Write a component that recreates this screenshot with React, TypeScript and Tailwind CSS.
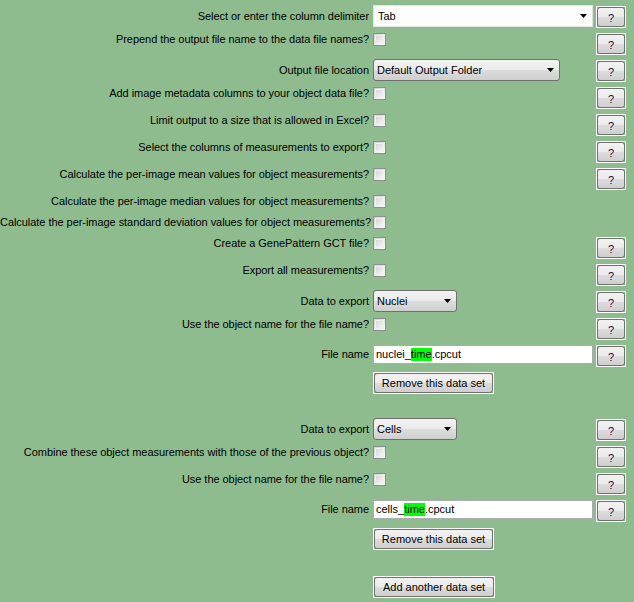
import React from 'react';

const font = { fontFamily: '"Liberation Sans", Arial, sans-serif' };

function HelpButton() {
  return (
    <div className="ml-[2px] mt-[1px] h-[22px] w-[30px] border border-white">
      <div className="flex h-full w-full items-center justify-center rounded-[3px] border border-[#707070] bg-[linear-gradient(#f2f2f2_0%,#ebebeb_50%,#dddddd_50%,#cfcfcf_100%)] pt-[2px] text-[11px] text-[#10104a]">
        ?
      </div>
    </div>
  );
}

function Checkbox() {
  return (
    <div className="mt-[1px] h-[13px] w-[13px] border border-[#8e8f8f] bg-[linear-gradient(135deg,#cfcfcf,#f0f0f0_70%,#ffffff)] p-[1px]">
      <div className="h-full w-full border border-[#f0f0f0]" />
    </div>
  );
}

function Arrow() {
  return (
    <svg width="7" height="4" viewBox="0 0 7 4" className="shrink-0">
      <path d="M0 0h7L3.5 4z" fill="#000" />
    </svg>
  );
}

function Combo({ value }: { value: string }) {
  return (
    <div className="flex h-[22px] w-[220px] items-center justify-between border border-[#e3e3e3] bg-white pl-[4px] pr-[5px]">
      <span>{value}</span>
      <Arrow />
    </div>
  );
}

function Choice({ value, width }: { value: string; width: string }) {
  return (
    <div
      className={`flex h-[22px] ${width} items-center justify-between rounded-[3px] border border-[#707070] bg-[linear-gradient(#f2f2f2_0%,#ebebeb_50%,#dddddd_50%,#cfcfcf_100%)] pl-[3px] pr-[5px]`}
    >
      <span>{value}</span>
      <Arrow />
    </div>
  );
}

function TextField({ prefix }: { prefix: string }) {
  return (
    <div className="mt-[1px] flex h-[19px] w-[220px] items-center border border-[#abadb3] bg-white pl-[2px]">
      <span>{prefix}</span>
      <span className="bg-[#00ff00]">time</span>
      <span>.cpcut</span>
    </div>
  );
}

function PushButton({ label, width }: { label: string; width: string }) {
  return (
    <div className={`mt-[1px] h-[22px] ${width} border border-white`}>
      <div className="flex h-full w-full items-center justify-center rounded-[3px] border border-[#707070] bg-[linear-gradient(#f2f2f2_0%,#ebebeb_50%,#dddddd_50%,#cfcfcf_100%)] text-[11px]">
        {label}
      </div>
    </div>
  );
}

function Row({
  label,
  children,
  help = true,
  h = 'h-[27px]',
}: {
  label?: string;
  children: React.ReactNode;
  help?: boolean;
  h?: string;
}) {
  return (
    <div className={`flex items-start pt-[1px] ${h}`}>
      <div className="flex w-[594px] items-center">
        <div className="w-[370px] shrink-0 whitespace-nowrap pr-[1px] text-right tracking-[-0.05px]">{label}</div>
        <div className="ml-[3px]">{children}</div>
      </div>
      {help && <HelpButton />}
    </div>
  );
}

export default function App() {
  return (
    <div className="h-[602px] w-[634px] overflow-hidden bg-[#8fbc8f] pt-[4px] text-[11px] leading-[13px] text-black" style={font}>
      <Row label="Select or enter the column delimiter">
        <Combo value="Tab" />
      </Row>
      <Row label="Prepend the output file name to the data file names?">
        <Checkbox />
      </Row>
      <Row label="Output file location">
        <Choice value="Default Output Folder" width="w-[187px]" />
      </Row>
      <Row label="Add image metadata columns to your object data file?">
        <Checkbox />
      </Row>
      <Row label="Limit output to a size that is allowed in Excel?">
        <Checkbox />
      </Row>
      <Row label="Select the columns of measurements to export?">
        <Checkbox />
      </Row>
      <Row label="Calculate the per-image mean values for object measurements?">
        <Checkbox />
      </Row>
      <Row label="Calculate the per-image median values for object measurements?" help={false} h="h-[21px]">
        <Checkbox />
      </Row>
      <Row label="Calculate the per-image standard deviation values for object measurements?" help={false} h="h-[21px]">
        <Checkbox />
      </Row>
      <Row label="Create a GenePattern GCT file?">
        <Checkbox />
      </Row>
      <Row label="Export all measurements?">
        <Checkbox />
      </Row>
      <Row label="Data to export">
        <Choice value="Nuclei" width="w-[84px]" />
      </Row>
      <Row label="Use the object name for the file name?">
        <Checkbox />
      </Row>
      <Row label="File name">
        <TextField prefix="nuclei_" />
      </Row>
      <Row help={false}>
        <PushButton label="Remove this data set" width="w-[121px]" />
      </Row>
      <div className="h-[20px]" />
      <Row label="Data to export">
        <Choice value="Cells" width="w-[84px]" />
      </Row>
      <Row label="Combine these object measurements with those of the previous object?">
        <Checkbox />
      </Row>
      <Row label="Use the object name for the file name?">
        <Checkbox />
      </Row>
      <Row label="File name" h="h-[28px]">
        <TextField prefix="cells_" />
      </Row>
      <Row help={false}>
        <PushButton label="Remove this data set" width="w-[121px]" />
      </Row>
      <div className="h-[21px]" />
      <Row help={false}>
        <PushButton label="Add another data set" width="w-[122px]" />
      </Row>
    </div>
  );
}
